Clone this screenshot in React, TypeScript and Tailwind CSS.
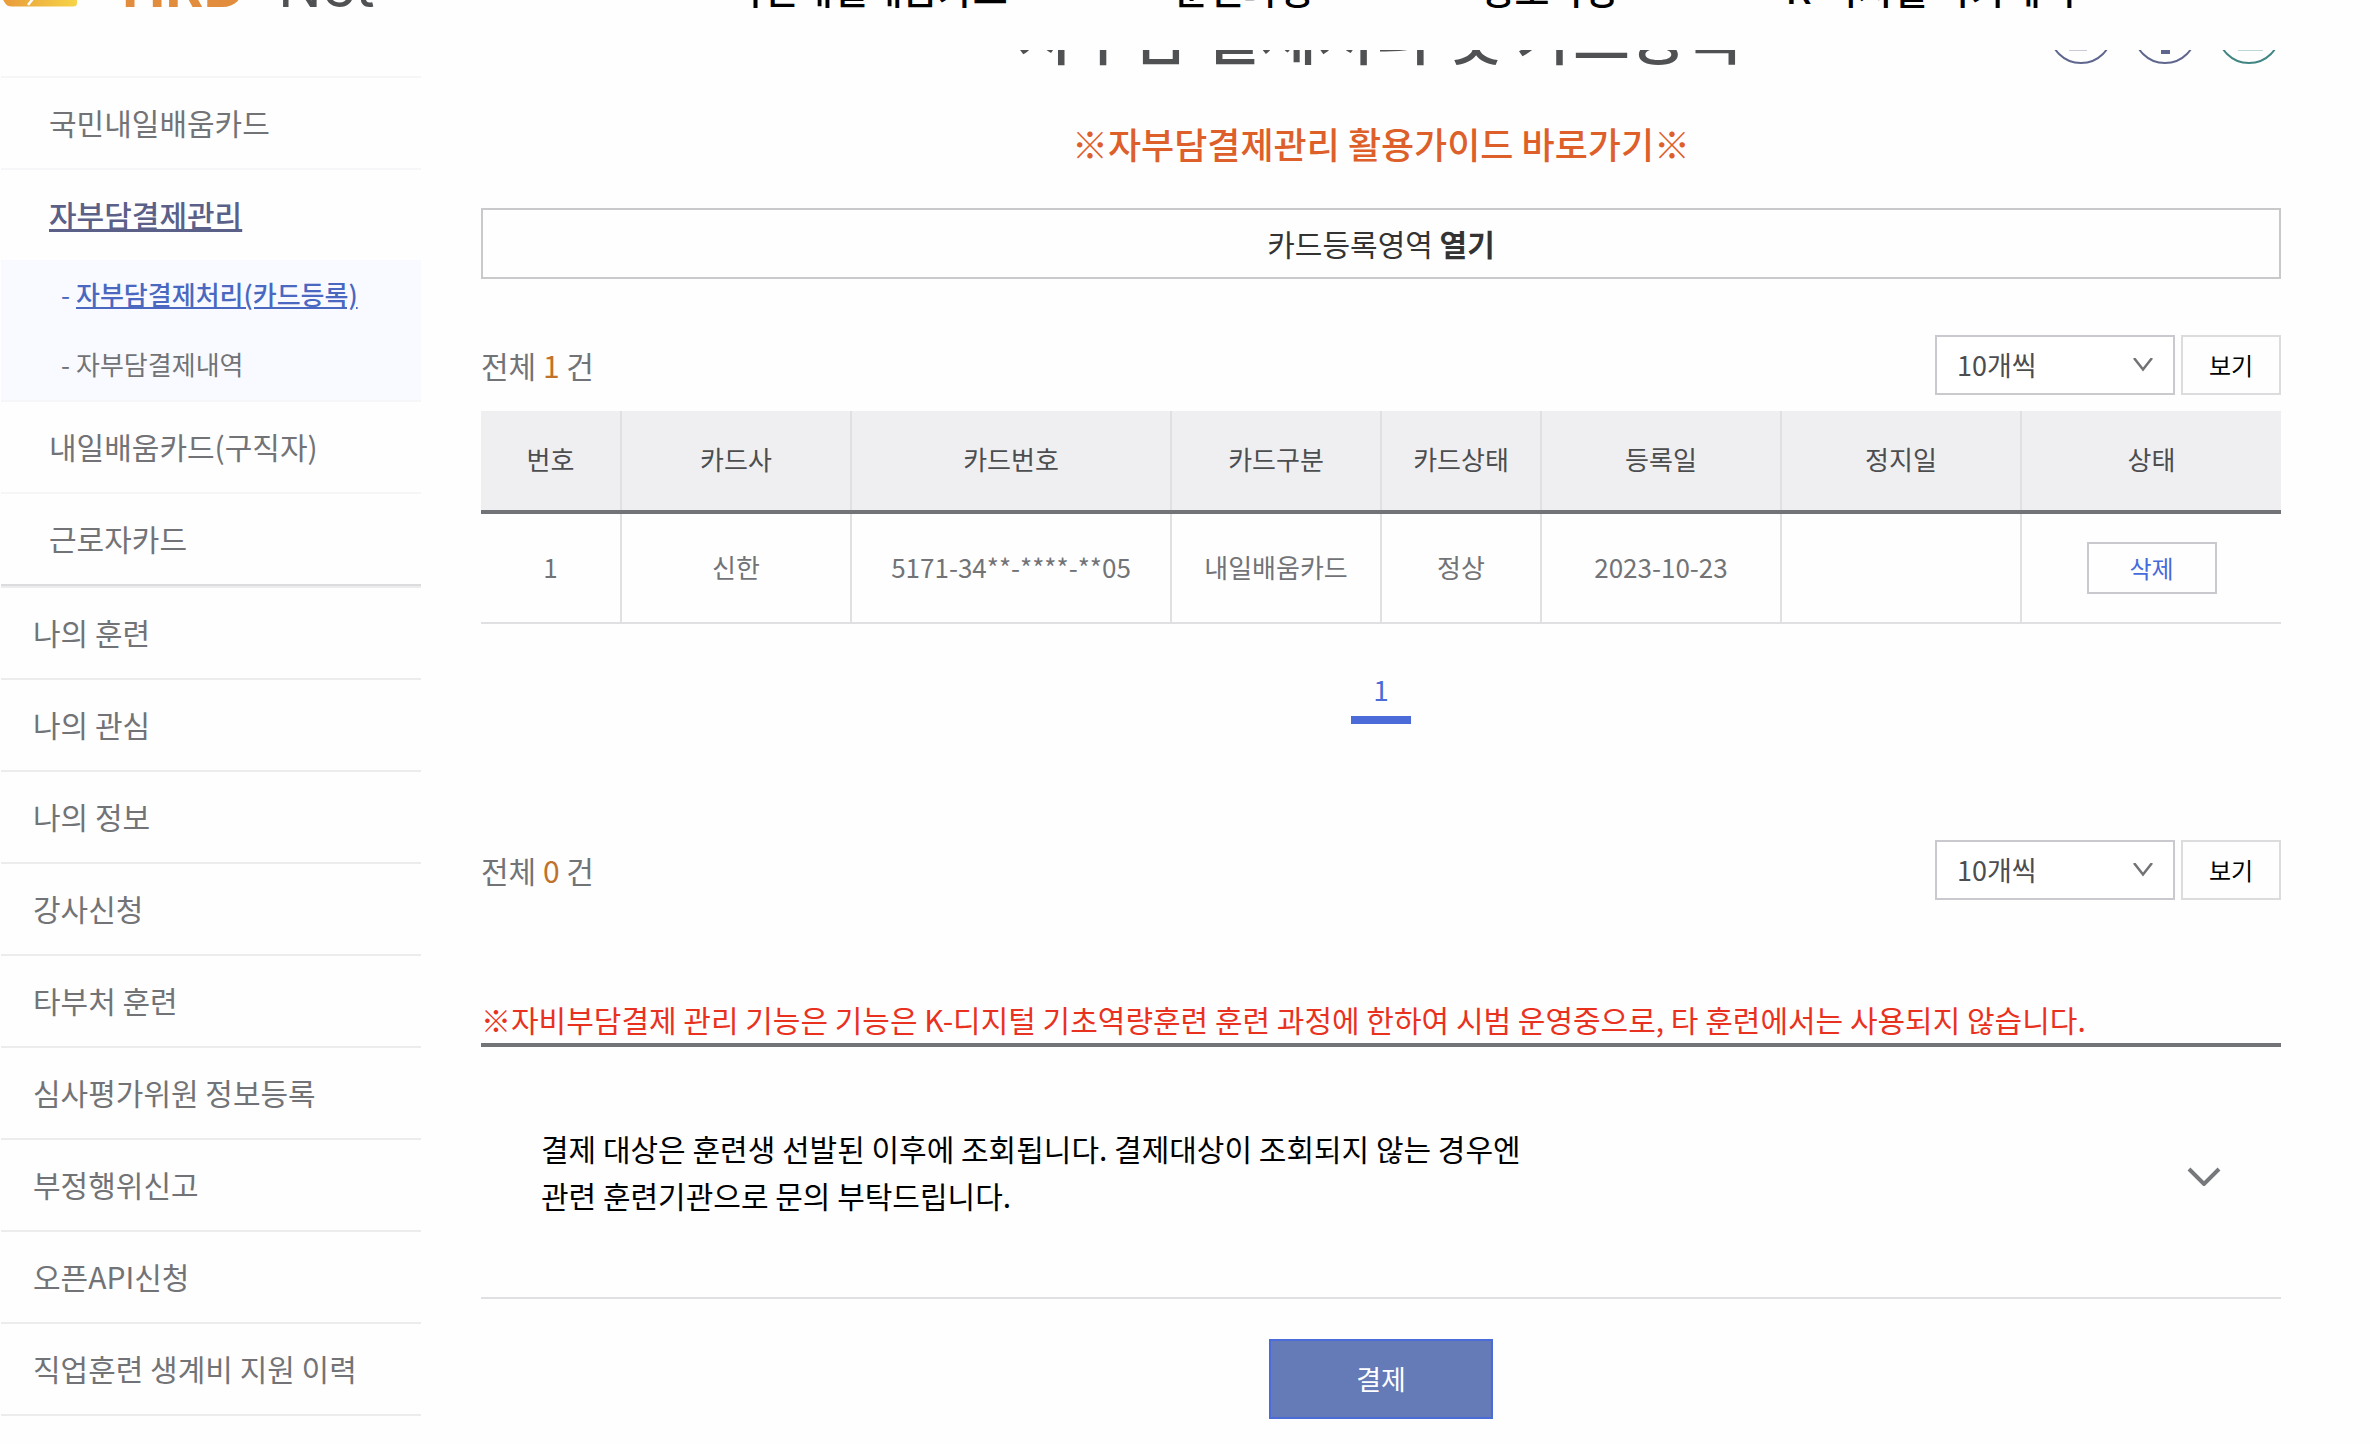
import * as React from 'react'

type MenuItem = { label: string; active?: boolean; children?: { label: string; active?: boolean }[] }

const navItems = ['국민내일배움카드', '훈련과정', '정보마당', 'K-디지털 아카데미']

const cardMenu: MenuItem[] = [
  { label: '국민내일배움카드' },
  {
    label: '자부담결제관리',
    active: true,
    children: [{ label: '자부담결제처리(카드등록)', active: true }, { label: '자부담결제내역' }],
  },
  { label: '내일배움카드(구직자)' },
  { label: '근로자카드' },
]

const mainMenu = [
  '나의 훈련',
  '나의 관심',
  '나의 정보',
  '강사신청',
  '타부처 훈련',
  '심사평가위원 정보등록',
  '부정행위신고',
  '오픈API신청',
  '직업훈련 생계비 지원 이력',
]

const columns = [
  { label: '번호', width: 'w-[140px]' },
  { label: '카드사', width: 'w-[230px]' },
  { label: '카드번호', width: 'w-[320px]' },
  { label: '카드구분', width: 'w-[210px]' },
  { label: '카드상태', width: 'w-[160px]' },
  { label: '등록일', width: 'w-[240px]' },
  { label: '정지일', width: 'w-[240px]' },
  { label: '상태', width: 'w-[260px]' },
]

const cards = [['1', '신한', '5171-34**-****-**05', '내일배움카드', '정상', '2023-10-23', '']]

function Header() {
  return (
    <header className="flex h-[50px] items-end overflow-hidden pb-[37px]">
      <a href="#home" className="flex w-[421px] shrink-0 items-end">
        <svg width="78" height="40" viewBox="0 0 78 40" className="shrink-0" aria-hidden="true">
          <defs>
            <linearGradient id="mark" x1="0" x2="1">
              <stop offset="0" stopColor="#e8993a" />
              <stop offset="1" stopColor="#f6d447" />
            </linearGradient>
          </defs>
          <path d="M0 0H77V30Q77 33.500 73 33.500H12Q7 33.500 5 30L2 25L0 20Z" fill="url(#mark)" />
          <path d="M28 32L36 22" stroke="#fff" strokeWidth="2.500" />
        </svg>
        <span className="ml-11 flex font-['Inter',sans-serif] text-[58px] leading-[54px]">
          <span className="font-bold text-[#e28d3e]">HRD</span>
          <span className="px-[3px] text-[#505153]">-</span>
          <span className="text-[#505153]">Net</span>
        </span>
      </a>
      <nav className="flex gap-[166px] pl-[307px] text-[38px] font-medium leading-[50px] text-black">
        {navItems.map((label) => (
          <a key={label} href="#nav" className="whitespace-nowrap">
            {label}
          </a>
        ))}
      </nav>
    </header>
  )
}

function SideMenu() {
  return (
    <nav className="ml-px w-[420px] shrink-0 pt-[26px] text-[30px] leading-[88px] text-[#727376]">
      <ul className="border-b-2 border-[#dcdcde]">
        {cardMenu.map((item) => (
          <li key={item.label} className="border-t-2 border-[#f6f6f8]">
            <a
              href="#menu"
              className={
                item.active ? 'block pb-[2px] pl-12 font-medium text-[#5a6088] underline' : 'block pb-[2px] pl-12'
              }
            >
              {item.label}
            </a>
            {item.children && (
              <ul className="bg-[#f8faff] text-[26px] leading-[68px]">
                {item.children.map((sub) => (
                  <li key={sub.label} className="flex gap-1.5 pb-[2px] pl-[60px]">
                    <span className={sub.active ? 'text-[#4a68c0]' : ''}>-</span>
                    <a href="#sub" className={sub.active ? 'font-medium text-[#4a68c0] underline' : ''}>
                      {sub.label}
                    </a>
                  </li>
                ))}
              </ul>
            )}
          </li>
        ))}
      </ul>
      <ul className="border-t-2 border-[#ececed]">
        {mainMenu.map((label) => (
          <li key={label} className="border-b-2 border-[#ececed]">
            <a href="#menu" className="block pb-[2px] pl-8">
              {label}
            </a>
          </li>
        ))}
      </ul>
    </nav>
  )
}

function PageTools() {
  return (
    <div className="flex gap-5 justify-self-end">
      <button aria-label="즐겨찾기">
        <svg width="64" height="64" viewBox="0 0 64 64" fill="none" stroke="#5f668e" strokeWidth="2">
          <circle cx="32" cy="32" r="31" />
          <path d="M20 50.500H38" stroke="#c9cbd8" strokeWidth="1" />
        </svg>
      </button>
      <button aria-label="도움말">
        <svg width="64" height="64" viewBox="0 0 64 64" fill="none" stroke="#5f668e" strokeWidth="2">
          <circle cx="32" cy="32" r="31" />
          <path d="M28 46H37V54H28Z" fill="#5f668e" stroke="none" />
        </svg>
      </button>
      <button aria-label="인쇄">
        <svg width="64" height="64" viewBox="0 0 64 64" fill="none" stroke="#3f8583" strokeWidth="2">
          <circle cx="32" cy="32" r="31" />
          <path d="M21 50.500H46" stroke="#bcd8d6" strokeWidth="1" />
        </svg>
      </button>
    </div>
  )
}

function ListBar({ id, count }: { id: string; count: number }) {
  return (
    <div className="flex items-center justify-between">
      <p className="text-[30px] leading-[60px] text-[#727376]">
        전체 <span className="text-[#c0722c]">{count}</span> 건
      </p>
      <div className="flex gap-[6px]">
        <div className="relative">
          <label htmlFor={id} className="sr-only">
            목록 개수
          </label>
          <select
            id={id}
            className="h-[60px] w-[240px] appearance-none border-2 border-[#c9c9ce] bg-white pl-5 text-[27px] leading-[40px] text-[#4c4d4f]"
          >
            <option>10개씩</option>
          </select>
          <svg
            className="pointer-events-none absolute right-[21px] top-[23px]"
            width="22"
            height="14"
            viewBox="0 0 22 14"
            fill="none"
            stroke="#727376"
            strokeWidth="2.500"
          >
            <path d="M2 0L11 11.500L20 0" />
          </svg>
        </div>
        <button className="h-[60px] w-[100px] border-2 border-[#dcdcde] text-[24px] text-black">보기</button>
      </div>
    </div>
  )
}

function CardTable() {
  return (
    <table className="mt-4 w-full table-fixed border-collapse text-center text-[26px]">
      <thead>
        <tr className="h-[101px] border-b-4 border-[#727376] bg-[#efeff1] text-[#4c4d4f]">
          {columns.map((col) => (
            <th key={col.label} className={`${col.width} border-r-2 border-r-[#e0e0e2] pb-1 font-normal last:border-r-0`}>
              {col.label}
            </th>
          ))}
        </tr>
      </thead>
      <tbody>
        {cards.map((card) => (
          <tr key={card[0]} className="h-[111px] border-b-2 border-[#e0e0e2] text-[#727376]">
            {card.map((value, i) => (
              <td key={i} className="border-r-2 border-r-[#e0e0e2] pb-1">
                {value}
              </td>
            ))}
            <td>
              <button className="h-[52px] w-[130px] border-2 border-[#c9c9ce] text-[24px] text-[#466bdb]">삭제</button>
            </td>
          </tr>
        ))}
      </tbody>
    </table>
  )
}

export default function App() {
  return (
    <div className="min-h-screen bg-[#fefefe] font-['Noto_Sans_CJK_KR',sans-serif]">
      <Header />
      <div className="flex">
        <SideMenu />
        <main className="min-w-0 flex-1 pl-[60px] pr-[89px]">
          {/* Title row, mostly scrolled under the header */}
          <div className="grid h-[68px] grid-cols-[1fr_auto_1fr] grid-rows-[14px] items-end overflow-hidden">
            <h1 className="col-start-2 text-[62px] font-medium leading-[62px] text-[#505153]">
              자부담 결제처리 및 카드등록
            </h1>
            <PageTools />
          </div>
          <p className="text-center text-[36px] font-medium leading-[50px] text-[#dd602a]">
            <a href="#guide">※자부담결제관리 활용가이드 바로가기※</a>
          </p>
          <button className="mb-14 mt-10 h-[71px] w-full border-2 border-[#c9c9cb] text-[30px] text-[#333]">
            카드등록영역 <strong>열기</strong>
          </button>

          <ListBar id="cardCount" count={1} />
          <CardTable />
          <div className="mb-[116px] mt-[38px] flex justify-center">
            <a
              href="#page1"
              className="w-[60px] border-b-8 border-[#4a6bd8] text-center text-[28px] leading-[54px] text-[#4a6bd8]"
            >
              1
            </a>
          </div>

          <ListBar id="payCount" count={0} />
          <p className="mt-[95px] text-[30px] leading-[48px] text-[#e8321f]">
            ※자비부담결제 관리 기능은 기능은 K-디지털 기초역량훈련 훈련 과정에 한하여 시범 운영중으로, 타 훈련에서는 사용되지
            않습니다.
          </p>
          <div className="flex items-center justify-between border-b-2 border-t-4 border-b-[#e0e0e2] border-t-[#727376] px-[60px] py-[78px]">
            <p className="text-[30px] leading-[47px] text-black">
              결제 대상은 훈련생 선발된 이후에 조회됩니다. 결제대상이 조회되지 않는 경우엔
              <br />
              관련 훈련기관으로 문의 부탁드립니다.
            </p>
            <button aria-label="펼치기">
              <svg width="34" height="28" viewBox="0 0 34 28" fill="none" stroke="#77787b" strokeWidth="4">
                <path d="M2 11L17 26L32 11" />
              </svg>
            </button>
          </div>
          <div className="mt-10 flex justify-center">
            <button className="h-[80px] w-[224px] border-2 border-[#4a6bd8] bg-[#647bb8] text-[27px] text-white">
              결제
            </button>
          </div>
        </main>
      </div>
    </div>
  )
}
